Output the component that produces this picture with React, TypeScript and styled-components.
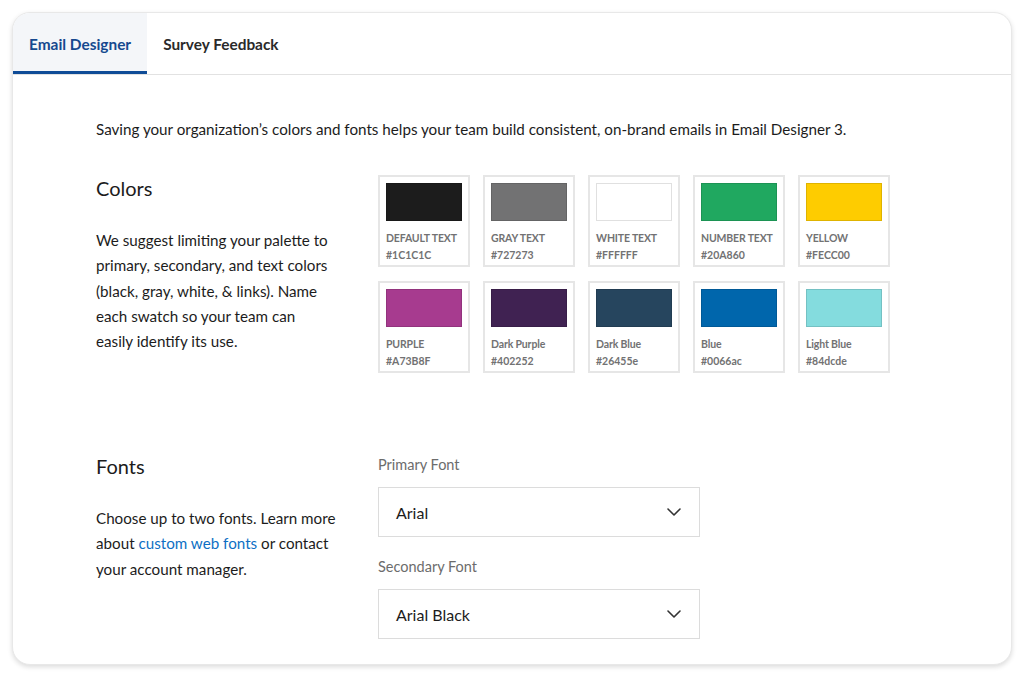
import { useState } from 'react';
import styled, { createGlobalStyle } from 'styled-components';

const GlobalStyle = createGlobalStyle`
  html, body {
    margin: 0;
    padding: 0;
    background: #ffffff;
  }
  body {
    font-family: 'Lato', 'Liberation Sans', sans-serif;
    color: #1c1c1c;
  }
`;

const Page = styled.div`
  padding: 12px 12px 14px 12px;
`;

const Card = styled.div`
  height: 653px;
  box-sizing: border-box;
  background: #ffffff;
  border: 1px solid #e8e8e8;
  border-radius: 18px;
  box-shadow: 0 2px 5px rgba(0, 0, 0, 0.14);
  overflow: hidden;
`;

const TabBar = styled.div`
  display: flex;
  border-bottom: 1px solid #e2e2e2;
  height: 61px;
`;

const Tab = styled.button<{ $active?: boolean }>`
  display: flex;
  align-items: center;
  padding: 3px 16px 0;
  border: none;
  border-bottom: 3px solid ${p => (p.$active ? '#0f4c97' : 'transparent')};
  background: ${p => (p.$active ? '#f4f6f9' : 'transparent')};
  color: ${p => (p.$active ? '#16498f' : '#2a2a2a')};
  font-family: inherit;
  font-size: 15.4px;
  font-weight: 700;
  cursor: pointer;
`;

const Body = styled.div`
  padding: 44px 83px 0;
`;

const Intro = styled.p`
  margin: 0 0 36px;
  font-size: 15.2px;
  line-height: 20px;
`;

const Row = styled.div<{ $gap?: number }>`
  display: grid;
  grid-template-columns: 282px 1fr;
  margin-bottom: ${p => p.$gap ?? 0}px;
`;

const Side = styled.div``;

const Heading = styled.h2`
  margin: 0 0 27px;
  font-size: 20px;
  font-weight: 400;
  line-height: 26px;
`;

const Text = styled.p<{ $width: number }>`
  margin: 0;
  font-size: 15.2px;
  line-height: 25.3px;
  max-width: ${p => p.$width}px;
`;

const Link = styled.a`
  color: #0d6fc4;
  text-decoration: none;
`;

const SwatchGrid = styled.div`
  display: grid;
  grid-template-columns: repeat(5, 92px);
  gap: 14px 13px;
`;

const Swatch = styled.div`
  box-sizing: border-box;
  width: 92px;
  height: 92px;
  border: 2px solid #e6e6e6;
  padding: 6px;
`;

const Chip = styled.div<{ $color: string }>`
  height: 38px;
  background: ${p => p.$color};
  border: 1px solid rgba(0, 0, 0, 0.12);
  box-sizing: border-box;
`;

const SwatchName = styled.div`
  margin-top: 9px;
  font-size: 10.5px;
  font-weight: 700;
  letter-spacing: -0.15px;
  color: #727273;
  line-height: 17px;
  white-space: nowrap;
`;

const SwatchHex = styled.div`
  font-size: 10.5px;
  font-weight: 700;
  color: #727273;
  line-height: 17px;
`;

const Fields = styled.div`
  display: flex;
  flex-direction: column;
  width: 322px;
  padding-top: 2px;
`;

const FieldLabel = styled.div`
  font-size: 14.5px;
  color: #6c6c6c;
  line-height: 20px;
  margin-bottom: 12px;
`;

const Select = styled.div`
  box-sizing: border-box;
  height: 50px;
  border: 1px solid #dcdcdc;
  display: flex;
  align-items: center;
  justify-content: space-between;
  padding: 0 18px 0 17px;
  font-size: 16px;
  color: #1c1c1c;
  margin-bottom: 20px;
`;

const Chevron = () => (
  <svg width="14" height="8" viewBox="0 0 14 8" fill="none">
    <path d="M1 1l6 6 6-6" stroke="#333" strokeWidth="1.6" strokeLinecap="round" strokeLinejoin="round" />
  </svg>
);

const swatches = [
  { name: 'DEFAULT TEXT', hex: '#1C1C1C' },
  { name: 'GRAY TEXT', hex: '#727273' },
  { name: 'WHITE TEXT', hex: '#FFFFFF' },
  { name: 'NUMBER TEXT', hex: '#20A860' },
  { name: 'YELLOW', hex: '#FECC00' },
  { name: 'PURPLE', hex: '#A73B8F' },
  { name: 'Dark Purple', hex: '#402252' },
  { name: 'Dark Blue', hex: '#26455e' },
  { name: 'Blue', hex: '#0066ac' },
  { name: 'Light Blue', hex: '#84dcde' },
];

export default function App() {
  const [tab, setTab] = useState('email');

  return (
    <>
      <GlobalStyle />
      <Page>
        <Card>
          <TabBar>
            <Tab $active={tab === 'email'} onClick={() => setTab('email')}>Email Designer</Tab>
            <Tab $active={tab === 'survey'} onClick={() => setTab('survey')}>Survey Feedback</Tab>
          </TabBar>
          <Body>
            <Intro>
              Saving your organization’s colors and fonts helps your team build consistent, on-brand emails in Email Designer 3.
            </Intro>
            <Row $gap={80}>
              <Side>
                <Heading>Colors</Heading>
                <Text $width={236}>
                  We suggest limiting your palette to primary, secondary, and text colors (black, gray, white, &amp; links). Name each swatch so your team can easily identify its use.
                </Text>
              </Side>
              <SwatchGrid>
                {swatches.map(s => (
                  <Swatch key={s.name}>
                    <Chip $color={s.hex} />
                    <SwatchName>{s.name}</SwatchName>
                    <SwatchHex>{s.hex}</SwatchHex>
                  </Swatch>
                ))}
              </SwatchGrid>
            </Row>
            <Row>
              <Side>
                <Heading>Fonts</Heading>
                <Text $width={246}>
                  Choose up to two fonts. Learn more about <Link href="#">custom web fonts</Link> or contact your account manager.
                </Text>
              </Side>
              <Fields>
                <FieldLabel>Primary Font</FieldLabel>
                <Select>
                  Arial
                  <Chevron />
                </Select>
                <FieldLabel>Secondary Font</FieldLabel>
                <Select>
                  Arial Black
                  <Chevron />
                </Select>
              </Fields>
            </Row>
          </Body>
        </Card>
      </Page>
    </>
  );
}
